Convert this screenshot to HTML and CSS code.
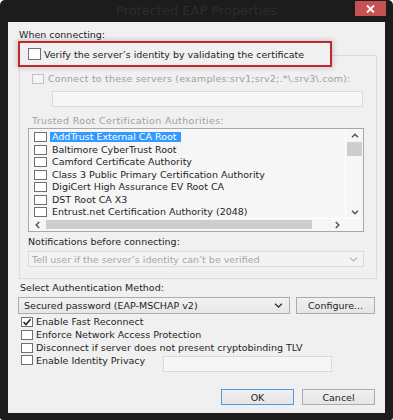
FILE: index.html
```html
<!DOCTYPE html>
<html lang="en">

<head>
    <meta charset="UTF-8">
    <meta name="viewport" content="width=device-width, initial-scale=1.0">
    <title>Protected EAP Properties</title>
    <link rel="stylesheet" href="styles.css">
</head>

<body>
    <div class="window">
        <div class="titlebar">
            <span></span>
            <span class="title">Protected EAP Properties</span>
            <span class="close">
                <svg width="9" height="8" viewBox="0 0 9 8"><path d="M1 0.5 L8 7.5 M8 0.5 L1 7.5" stroke="#fff" stroke-width="1.8" /></svg>
            </span>
        </div>
        <div class="panel">
            <div class="label head">When connecting:</div>
            <div class="group">
                <div class="verify">
                    <span class="cb big"></span>
                    <span>Verify the server’s identity by validating the certificate</span>
                </div>
                <div class="row connect">
                    <span class="cb off"></span>
                    <span>Connect to these servers (examples:srv1;srv2;.*\.srv3\.com):</span>
                </div>
                <div class="textbox servers"></div>
                <div class="label trusted">Trusted Root Certification Authorities:</div>
                <div class="list">
                    <div class="list-main">
                        <div class="items">
                            <div class="item sel"><span class="cb"></span><span class="name">AddTrust External CA Root</span></div>
                            <div class="item"><span class="cb"></span><span class="name">Baltimore CyberTrust Root</span></div>
                            <div class="item"><span class="cb"></span><span class="name">Camford Certificate Authority</span></div>
                            <div class="item"><span class="cb"></span><span class="name">Class 3 Public Primary Certification Authority</span></div>
                            <div class="item"><span class="cb"></span><span class="name">DigiCert High Assurance EV Root CA</span></div>
                            <div class="item"><span class="cb"></span><span class="name">DST Root CA X3</span></div>
                            <div class="item"><span class="cb"></span><span class="name">Entrust.net Certification Authority (2048)</span></div>
                        </div>
                        <div class="vscroll">
                            <div class="arrow up">
                                <svg width="8" height="5" viewBox="0 0 8 5"><path d="M1 4.2 L4 1.2 L7 4.2" fill="none" stroke="#555" stroke-width="1.5" /></svg>
                            </div>
                            <div class="vthumb"></div>
                            <div class="track"></div>
                            <div class="arrow down">
                                <svg width="8" height="5" viewBox="0 0 8 5"><path d="M1 0.8 L4 3.8 L7 0.8" fill="none" stroke="#555" stroke-width="1.5" /></svg>
                            </div>
                        </div>
                    </div>
                    <div class="hscroll">
                        <div class="harrow">
                            <svg width="5" height="8" viewBox="0 0 5 8"><path d="M4.2 1 L1.2 4 L4.2 7" fill="none" stroke="#555" stroke-width="1.5" /></svg>
                        </div>
                        <div class="hthumb"></div>
                        <div class="track"></div>
                        <div class="harrow">
                            <svg width="5" height="8" viewBox="0 0 5 8"><path d="M0.8 1 L3.8 4 L0.8 7" fill="none" stroke="#555" stroke-width="1.5" /></svg>
                        </div>
                        <div class="corner"></div>
                    </div>
                </div>
                <div class="label notif">Notifications before connecting:</div>
                <div class="combo off">
                    <span>Tell user if the server’s identity can’t be verified</span>
                    <svg width="9" height="5" viewBox="0 0 9 5"><path d="M1 0.8 L4.5 4 L8 0.8" fill="none" stroke="#b8b8b8" stroke-width="1.2" /></svg>
                </div>
            </div>
            <div class="label auth">Select Authentication Method:</div>
            <div class="method">
                <div class="combo">
                    <span>Secured password (EAP-MSCHAP v2)</span>
                    <svg width="9" height="5" viewBox="0 0 9 5"><path d="M1 0.8 L4.5 4 L8 0.8" fill="none" stroke="#333" stroke-width="1.3" /></svg>
                </div>
                <button class="btn configure">Configure...</button>
            </div>
            <div class="options">
                <div class="opt">
                    <span class="cb">
                        <svg width="10" height="8" viewBox="0 0 10 8"><path d="M1.5 4 L4 6.5 L8.5 1.2" fill="none" stroke="#222" stroke-width="1.6" /></svg>
                    </span>
                    <span>Enable Fast Reconnect</span>
                </div>
                <div class="opt"><span class="cb"></span><span>Enforce Network Access Protection</span></div>
                <div class="opt"><span class="cb"></span><span>Disconnect if server does not present cryptobinding TLV</span></div>
                <div class="opt privacy">
                    <span class="cb"></span>
                    <span class="privacy-label">Enable Identity Privacy</span>
                    <div class="textbox identity"></div>
                </div>
            </div>
            <div class="actions">
                <button class="btn ok">OK</button>
                <button class="btn">Cancel</button>
            </div>
        </div>
    </div>
</body>

</html>
```

FILE: styles.css
```css
* {
    margin: 0;
    padding: 0;
    box-sizing: border-box;
}

body {
    background: #fff;
    font-family: "DejaVu Sans", Verdana, sans-serif;
    font-size: 9.5px;
    color: #1e1e1e;
}

.window {
    width: 393px;
    height: 420px;
    background: #1c1c1c;
    border-radius: 5px 5px 3px 3px;
    padding: 0 8px 7px;
    display: flex;
    flex-direction: column;
}

.titlebar {
    height: 22px;
    display: grid;
    grid-template-columns: 31px 1fr 31px;
}

.title {
    font-size: 13px;
    color: #2c2c2c;
    text-align: center;
    line-height: 22px;
}

.close {
    margin: 1px -1px 0 1px;
    height: 15px;
    background: #c75050;
    display: flex;
    align-items: center;
    justify-content: center;
}

.panel {
    flex: 1;
    background: #f0f0f0;
    padding: 6px 10px 0 10px;
    display: flex;
    flex-direction: column;
}

.label {
    height: 13px;
    line-height: 13px;
    white-space: nowrap;
}

.head {
    margin-left: 1px;
}

.cb {
    width: 12px;
    height: 10px;
    border: 1px solid #707070;
    background: #fff;
    flex: none;
    display: flex;
    align-items: center;
    justify-content: center;
}

.cb.big {
    width: 13px;
    height: 12px;
}

.cb.off {
    border-color: #c2c2c2;
    background: #f4f4f4;
}

.group {
    width: 358px;
    margin: 14px 0 0 1px;
    border: 1px solid #dcdcdc;
    padding-bottom: 11px;
}

.verify {
    margin: -15px 0 0 -2px;
    width: 314px;
    height: 26px;
    border: 2px solid #c1272d;
    box-shadow: 0 0 5px 1px rgba(0, 0, 0, 0.18);
    background: #f0f0f0;
    display: flex;
    align-items: center;
    gap: 3px;
    padding-left: 8px;
    white-space: nowrap;
}

.row {
    display: flex;
    align-items: center;
    height: 13px;
    gap: 4px;
    white-space: nowrap;
}

.connect {
    margin: 5px 0 0 12px;
    color: #a0a0a0;
    letter-spacing: 0.2px;
}

.textbox {
    border: 1px solid #dadada;
    background: #f6f6f6;
}

.servers {
    margin: 6px 0 0 32px;
    width: 311px;
    height: 16px;
}

.trusted {
    margin: 7px 0 0 12px;
    color: #a0a0a0;
    letter-spacing: 0.35px;
}

.list {
    margin: 1px 0 0 8px;
    width: 336px;
    height: 104px;
    border: 1px solid #a9a9a9;
    background: #f6f6f6;
    display: flex;
    flex-direction: column;
}

.list-main {
    height: 89px;
    display: flex;
}

.items {
    flex: 1;
    padding: 2px 0 0 5px;
    overflow: hidden;
}

.item {
    height: 12.5px;
    display: flex;
    align-items: center;
    gap: 5px;
    white-space: nowrap;
}

.item .cb {
    width: 13px;
}

.item .name {
    height: 10px;
    line-height: 10px;
    padding: 0 4px 0 2px;
    margin-left: -2px;
}

.item.sel .name {
    background: #3399ff;
    color: #fff;
}

.vscroll {
    width: 18px;
    border-left: 1px solid #fff;
    display: flex;
    flex-direction: column;
    align-items: center;
}

.arrow {
    height: 13px;
    display: flex;
    align-items: center;
    justify-content: center;
}

.arrow.down {
    height: 12px;
}

.vthumb {
    width: 15px;
    height: 14px;
    background: #cdcdcd;
}

.track {
    flex: 1;
}

.hscroll {
    height: 12px;
    display: flex;
    border-top: 1px solid #fff;
}

.harrow {
    width: 17px;
    display: flex;
    align-items: center;
    justify-content: center;
}

.hthumb {
    width: 266px;
    margin-top: 1px;
    height: 9px;
    background: #cdcdcd;
}

.corner {
    width: 17px;
}

.notif {
    margin: 3px 0 0 8px;
}

.combo {
    height: 16px;
    display: flex;
    align-items: center;
    justify-content: space-between;
    white-space: nowrap;
}

.combo.off {
    margin: 3px 0 0 8px;
    width: 336px;
    border: 1px solid #dadada;
    background: #f3f3f3;
    color: #a8a8a8;
    padding: 0 5px 0 3px;
}

.auth {
    margin: 2px 0 0 2px;
}

.method {
    display: flex;
    gap: 6px;
    margin-top: 3px;
    height: 17px;
}

.method .combo {
    height: 17px;
    width: 272px;
    border: 1px solid #acacac;
    background: linear-gradient(#f2f2f2, #e6e6e6);
    padding: 0 6px 0 5px;
}

.btn {
    font: inherit;
    color: inherit;
    border: 1px solid #acacac;
    background: linear-gradient(#f0f0f0, #e5e5e5);
}

.configure {
    width: 79px;
}

.options {
    margin: 1px 0 0 3px;
}

.opt {
    height: 13px;
    display: flex;
    align-items: center;
    gap: 3px;
    white-space: nowrap;
}

.opt.privacy {
    height: auto;
    align-items: flex-start;
    gap: 0;
}

.privacy .cb {
    margin-top: 1px;
}

.privacy-label {
    width: 130px;
    padding-left: 3px;
    line-height: 13px;
}

.identity {
    margin-top: 2px;
    width: 169px;
    height: 16px;
}

.actions {
    display: flex;
    justify-content: flex-end;
    gap: 8px;
    margin-top: 17px;
}

.actions .btn {
    width: 73px;
    height: 16px;
}

.btn.ok {
    border-color: #4a9be0;
}
```
